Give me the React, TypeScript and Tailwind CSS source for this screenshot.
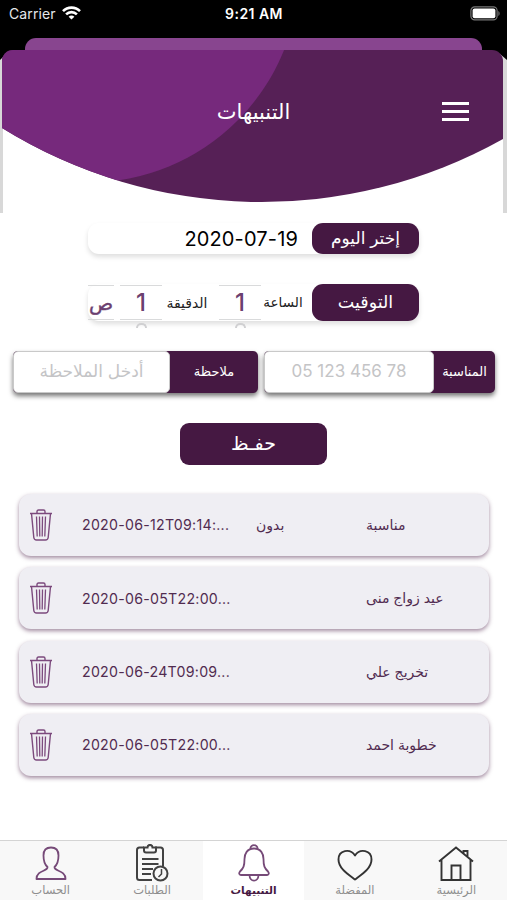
import { clsx } from 'clsx';

const reminders = [
  { id: 1, date: '2020-06-12T09:14:...', note: 'بدون', title: 'مناسبة' },
  { id: 2, date: '2020-06-05T22:00...', note: '', title: 'عيد زواج منى' },
  { id: 3, date: '2020-06-24T09:09...', note: '', title: 'تخريج علي' },
  { id: 4, date: '2020-06-05T22:00...', note: '', title: 'خطوبة احمد' },
];

const StatusBar = () => (
  <div className="flex h-[38px] items-start justify-between bg-black pt-[5px] pr-[6px] pl-[9px] text-white">
    <div className="flex w-[147px] items-center gap-[6px]">
      <span className="text-[14px] leading-[18px] tracking-[0.1px] text-gray-200">Carrier</span>
      <svg className="-mt-[2px]" width="19" height="14" viewBox="0 0 19 14" fill="none" stroke="#fff" strokeWidth="2.6">
        <path d="M1 5.2C5.7.4 13.3.4 18 5.2" />
        <path d="M4.1 8.4c3-3 7.8-3 10.8 0" />
        <path d="M9.5 13.6 6.6 10.7c1.6-1.5 4.2-1.5 5.8 0z" fill="#fff" stroke="none" />
      </svg>
    </div>
    <span className="text-[14px] leading-[18px] font-semibold tracking-[0.45px]">9:21 AM</span>
    <div className="flex w-[149px] justify-end pt-px">
      <svg width="31" height="15" viewBox="0 0 31 15">
        <rect x=".9" y=".9" width="26.2" height="13" rx="3.8" fill="none" stroke="#777" strokeWidth="1.2" />
        <rect x="2.6" y="2.6" width="22.8" height="9.6" rx="2" fill="#fff" />
        <path d="M28.4 5v5c1.6-.7 1.6-4.3 0-5z" fill="#777" />
      </svg>
    </div>
  </div>
);

const Header = () => (
  <header className="grid h-[176px] grid-cols-1">
    <svg className="[grid-area:1/1]" width="507" height="176" viewBox="0 38 507 176">
      <defs>
        <clipPath id="bowl">
          <path d="M2 61a11 11 0 0 1 11-11H492a11 11 0 0 1 11 11V139A493 493 0 0 1 2 128z" />
        </clipPath>
      </defs>
      <path d="M0 38H507V66L494 52H14L0 66z" fill="#000" />
      <path d="M0 60L6 54H500L507 60V213H0z" fill="#d8d8d8" />
      <path d="M25 52V49a11 11 0 0 1 11-11H471a11 11 0 0 1 11 11V52z" fill="#88458f" />
      <path d="M3 100H503V214H3z" fill="#fff" />
      <g clipPath="url(#bowl)">
        <path d="M0 38H507V214H0z" fill="#562056" />
        <circle cx="88.2" cy="-28.3" r="210.9" fill="#76297c" />
      </g>
    </svg>
    <div className="flex h-[147px] items-center justify-between pr-[38px] pl-[37px] [grid-area:1/1]">
      <span className="w-[28px]" />
      <h1 className="text-[21px] text-white" dir="rtl">
        التنبيهات
      </h1>
      <button className="flex w-[27px] flex-col gap-[4.5px]">
        <span className="h-[3.5px] bg-white" />
        <span className="h-[3.5px] bg-white" />
        <span className="h-[3.5px] bg-white" />
      </button>
    </div>
  </header>
);

const Picker: React.FC<{ value: string; hasNext?: boolean; className: string }> = props => (
  <div className={clsx('relative flex h-[35px] items-center justify-center border-y border-[#d9dadb] text-[#6b4070]', props.className)}>
    <span>{props.value}</span>
    {/* top of the following wheel entry */}
    {props.hasNext && (
      <span className="absolute top-[37px] h-[5px] w-[11px] rounded-t-full border-2 border-b-0 border-[#d0d0d2]" />
    )}
  </div>
);

const Field: React.FC<{ label: string; placeholder: string; className: string; labelClass: string }> = props => (
  <div className={clsx('flex h-[42px] rounded-[5px] bg-[#451842] shadow-[0_3px_5px_rgba(0,0,0,0.55)]', props.className)}>
    <div className="flex flex-1 items-center justify-center rounded-[5px] border border-[#c9c9c9] bg-white text-[17px] text-[#c4c4c6]">
      <span dir="auto">{props.placeholder}</span>
    </div>
    <div className={clsx('flex items-center justify-center text-[13px] text-white', props.labelClass)} dir="rtl">
      {props.label}
    </div>
  </div>
);

const TrashIcon = () => (
  <svg width="22" height="32" viewBox="0 0 22 32" fill="none" stroke="#7c4a7d" strokeWidth="1.4">
    <path d="M0 4.5h22M7 4.2V2.5Q7 1 8.5 1h5Q15 1 15 2.5V4.2" />
    <path d="M1.5 4.5 3.8 28.5Q4.1 31 6.5 31h9q2.4 0 2.7-2.5L20.5 4.5" />
    <path d="M6.5 7.5 7.2 27.5M9.5 7.5l.3 20M12.5 7.5l-.3 20M15.5 7.5l-.7 20" strokeWidth="1.3" />
  </svg>
);

const TabItem: React.FC<{ label: string; active?: boolean; children: React.ReactNode }> = props => (
  <div className={clsx('flex flex-1 flex-col items-center pt-[2px]', props.active ? 'bg-white' : 'bg-[#f8f8f8]')}>
    <div className="flex h-[40px] items-center">{props.children}</div>
    <span dir="rtl" className={clsx('leading-[15px]', props.active ? 'text-[10.5px] font-bold text-[#451842]' : 'text-[11.5px] text-[#8e8e8e]')}>
      {props.label}
    </span>
  </div>
);

const TabBar = () => (
  <nav className="flex h-[60px] border-t border-[#d4d4d4]">
    <TabItem label="الحساب">
      <svg width="32" height="34" viewBox="0 0 32 34" fill="none" stroke="#764a78" strokeWidth="1.8" strokeLinejoin="round">
        <path d="M12.5 21C9.5 18.5 8.5 14 8.5 9.5 8.5 4 11.5 1.500 16 1.500S23.500 4 23.500 9.500C23.500 14 22.500 18.500 19.500 21 19 25.500 30.500 24 30.500 33H1.500C1.500 24 13 25.500 12.500 21z" />
      </svg>
    </TabItem>
    <TabItem label="الطلبات">
      <svg width="34" height="38" viewBox="0 0 34 38" fill="none" stroke="#424242" strokeWidth="2">
        <path d="M17 36H4.500Q2 36 2 33.500V6q0-2.500 2.500-2.500H9M20 3.500h5.500Q28 3.500 28 6V22" />
        <path d="M9 3.500H12.500C12.500 0 17.500 0 17.500 3.500H21V6.500Q21 8.500 19 8.500H11Q9 8.500 9 6.500z" />
        <path d="M7 15H23.500M7 20H23.500M7 25H18M7 30H16" />
        <circle cx="25.500" cy="29.500" r="7" fill="#f8f8f8" />
        <path d="M26.500 25V30L23.500 33" strokeWidth="1.500" />
      </svg>
    </TabItem>
    <TabItem label="التنبيهات" active>
      <svg width="34" height="38" viewBox="0 0 34 38" fill="none" stroke="#764a78" strokeWidth="1.8" strokeLinejoin="round">
        <path d="M13.500 4.800C13 0 21 0 20.500 4.800" />
        <path d="M17 4.500C10 4.500 7.500 10 7.500 15c0 7-1 9-4.500 12.500Q1 30.500 4 31H30q3-.5 1-3.500C27.500 24 26.500 22 26.500 15c0-5-2.500-10.500-9.500-10.500z" />
        <path d="M12.500 31c0 7.500 9 7.500 9 0" />
      </svg>
    </TabItem>
    <TabItem label="المفضلة">
      <svg width="36" height="38" viewBox="0 0 36 38" fill="none" stroke="#333" strokeWidth="1.9" strokeLinejoin="round">
        <path d="M18 35.500C10 29.500 1.500 24 1.500 15.500 1.500 6 13 4 18 11.500 23 4 34.500 6 34.500 15.500 34.500 24 26 29.500 18 35.500z" />
      </svg>
    </TabItem>
    <TabItem label="الرئيسية">
      <svg width="36" height="38" viewBox="0 0 36 38" fill="none" stroke="#333" strokeWidth="1.9">
        <path d="M1 17.500 18 3.500 35 17.500M3.500 15.500V36H32.500V15.500M13.500 36V21.500H22.500V36M25.500 9.500V7H29.500V13" />
      </svg>
    </TabItem>
  </nav>
);

export default function App() {
  return (
    <div className="flex h-[900px] w-[507px] flex-col overflow-hidden bg-white font-['Inter','DejaVu_Sans',sans-serif]">
      <StatusBar />
      <Header />
      <main className="flex flex-1 flex-col">
        <div className="mt-[9px] ml-[88px] flex h-[31px] w-[331px] rounded-[11px] shadow-[0_3px_5px_rgba(0,0,0,0.13)]">
          <div className="flex flex-1 items-center justify-end pr-[14px] text-[20px] tracking-[0.15px] text-black">2020-07-19</div>
          <div className="flex w-[107px] items-center justify-center rounded-[11px] bg-[#451842] text-[17px] text-white" dir="rtl">
            إختر اليوم
          </div>
        </div>

        <div className="mt-[30px] ml-[88px] flex h-[37px] w-[331px] items-center rounded-[11px] shadow-[0_3px_5px_rgba(0,0,0,0.13)]">
          <Picker value="ص" className="w-[26px] text-[20px] [-webkit-text-stroke:0.4px_#6b4070]" />
          <Picker value="1" hasNext className="ml-[6px] w-[42px] text-[24px] font-medium" />
          <span className="w-[50px] text-center text-[14px] text-[#222]" dir="rtl">
            الدقيقة
          </span>
          <Picker value="1" hasNext className="ml-[7px] w-[42px] text-[24px] font-medium" />
          <span className="w-[44px] text-center text-[13.5px] text-[#222]" dir="rtl">
            الساعة
          </span>
          <div className="ml-auto flex h-full w-[107px] items-center justify-center rounded-[11px] bg-[#451842] text-[17.5px] text-white" dir="rtl">
            التوقيت
          </div>
        </div>

        <div className="mt-[30px] flex gap-[6px] pl-[13px]">
          <Field label="ملاحظة" placeholder="أدخل الملاحظة" className="w-[245px]" labelClass="w-[88px]" />
          <Field label="المناسبة" placeholder="05 123 456 78" className="w-[231px]" labelClass="w-[61px]" />
        </div>

        <button className="mt-[30px] ml-[180px] flex h-[42px] w-[147px] items-center justify-center rounded-[9px] bg-[#451842] text-[19px] text-white" dir="rtl">
          حفـظ
        </button>

        <ul className="mt-[29px] ml-[19px] flex w-[470px] flex-col gap-[11.3px]">
          {reminders.map(item => (
            <li
              key={item.id}
              className="flex h-[62px] items-center rounded-[12px] bg-[#efeef3] pl-[11px] text-[14px] text-[#512b50] shadow-[0_2px_4px_rgba(69,24,66,0.5)]"
            >
              <TrashIcon />
              <span className="ml-[30px] w-[174px] text-[14.2px] tracking-[0.25px] whitespace-nowrap">{item.date}</span>
              <span className="w-[110px] pb-px">{item.note}</span>
              <span className="pb-px">{item.title}</span>
            </li>
          ))}
        </ul>
      </main>
      <TabBar />
    </div>
  );
}
